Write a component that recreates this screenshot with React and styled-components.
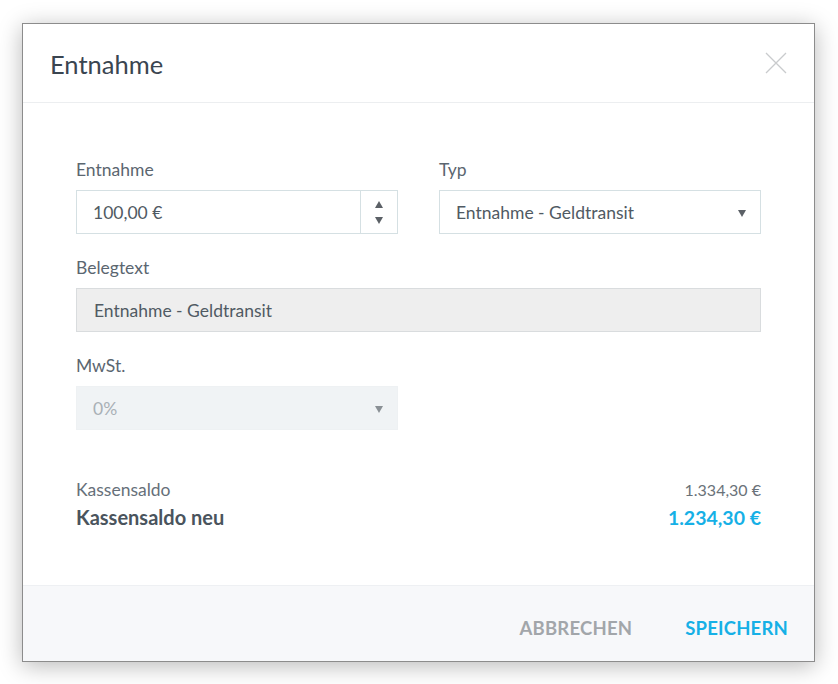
import React from "react";
import styled, { createGlobalStyle } from "styled-components";

const GlobalStyle = createGlobalStyle`
    html, body {
        margin: 0;
        padding: 0;
        background: #ffffff;
        font-family: Lato, "Open Sans", sans-serif;
    }
    * {
        box-sizing: border-box;
    }
`;

const Page = styled.div`
    padding: 23px 23px 23px 22px;
    width: 838px;
    height: 684px;
`;

const Dialog = styled.div`
    width: 793px;
    height: 639px;
    background: #ffffff;
    border: 1px solid #8c8c8c;
    box-shadow: 0 4px 22px rgba(0, 0, 0, 0.28);
    display: flex;
    flex-direction: column;
`;

const Header = styled.div`
    height: 79px;
    display: flex;
    align-items: center;
    justify-content: space-between;
    padding: 0 26px 0 27px;
    border-bottom: 1px solid #eceef0;
    h1 {
        margin: 0;
        font-size: 25.5px;
        font-weight: 400;
        color: #3a4550;
        padding-top: 1px;
    }
`;

const Close = styled.button`
    border: none;
    background: none;
    padding: 0;
    width: 24px;
    height: 24px;
    cursor: pointer;
`;

const Body = styled.div`
    flex: 1;
    padding: 57px 53px 0;
`;

const Row = styled.div`
    display: grid;
    grid-template-columns: ${(p) => p.$cols || "1fr"};
    column-gap: 41px;
    margin-bottom: 24px;
`;

const Field = styled.div`
    display: flex;
    flex-direction: column;
`;

const Label = styled.label`
    font-size: 17.5px;
    line-height: 20px;
    color: #5b6670;
    margin-bottom: 10px;
`;

const Box = styled.div`
    height: 44px;
    display: flex;
    align-items: center;
    border: 1px solid ${(p) => (p.$muted ? "#eef1f3" : p.$grey ? "#d9dcde" : "#d5e0e3")};
    background: ${(p) => (p.$muted ? "#f0f3f5" : p.$grey ? "#eeeeee" : "#ffffff")};
    color: ${(p) => (p.$muted ? "#a9b0b5" : "#505a63")};
    font-size: 17.5px;
    padding-left: ${(p) => (p.$grey ? "17px" : "16px")};
`;

const Value = styled.span`
    flex: 1;
`;

const Spinner = styled.div`
    width: 37px;
    height: 100%;
    border-left: 1px solid #d5e0e3;
    display: flex;
    flex-direction: column;
    align-items: center;
    justify-content: center;
    gap: 9px;
`;

const Caret = styled.span`
    width: 0;
    height: 0;
    border-left: 4.5px solid transparent;
    border-right: 4.5px solid transparent;
    ${(p) =>
        p.$up
            ? `border-bottom: 7px solid ${p.$color || "#5b6066"};`
            : `border-top: 7px solid ${p.$color || "#5b6066"};`}
`;

const SelectCaret = styled.div`
    width: 36px;
    display: flex;
    justify-content: center;
    padding-top: 3px;
`;

const Summary = styled.div`
    margin-top: 49px;
    display: flex;
    flex-direction: column;
    gap: 5px;
`;

const SumRow = styled.div`
    display: flex;
    justify-content: space-between;
    align-items: baseline;
    font-size: ${(p) => (p.$strong ? "20px" : "17.5px")};
    font-weight: ${(p) => (p.$strong ? 700 : 400)};
    color: ${(p) => (p.$strong ? "#4a545d" : "#66707a")};
    span:last-child {
        color: ${(p) => (p.$strong ? "#16b0e6" : "#6a7279")};
        font-size: ${(p) => (p.$strong ? "19.5px" : "16px")};
    }
`;

const Footer = styled.div`
    height: 76px;
    background: #f7f8fa;
    border-top: 1px solid #eef0f3;
    display: flex;
    justify-content: flex-end;
    align-items: center;
    gap: 53px;
    padding: 9px 26px 0 0;
`;

const Button = styled.button`
    border: none;
    background: none;
    padding: 0;
    font-family: inherit;
    font-size: 18.5px;
    font-weight: 700;
    letter-spacing: 0.2px;
    color: ${(p) => (p.$primary ? "#16b0e6" : "#a2a6aa")};
    cursor: pointer;
`;

const CloseIcon = () => (
    <svg width="24" height="24" viewBox="0 0 24 24">
        <path d="M2 2 L22 22 M22 2 L2 22" stroke="#c9cbcd" strokeWidth="1.3" fill="none" />
    </svg>
);

const App = () => (
    <>
        <GlobalStyle />
        <Page>
            <Dialog>
                <Header>
                    <h1>Entnahme</h1>
                    <Close aria-label="Schließen">
                        <CloseIcon />
                    </Close>
                </Header>
                <Body>
                    <Row $cols="1fr 1fr">
                        <Field>
                            <Label>Entnahme</Label>
                            <Box>
                                <Value>100,00 €</Value>
                                <Spinner>
                                    <Caret $up />
                                    <Caret />
                                </Spinner>
                            </Box>
                        </Field>
                        <Field>
                            <Label>Typ</Label>
                            <Box>
                                <Value>Entnahme - Geldtransit</Value>
                                <SelectCaret>
                                    <Caret />
                                </SelectCaret>
                            </Box>
                        </Field>
                    </Row>
                    <Row>
                        <Field>
                            <Label>Belegtext</Label>
                            <Box $grey>
                                <Value>Entnahme - Geldtransit</Value>
                            </Box>
                        </Field>
                    </Row>
                    <Row $cols="1fr 1fr">
                        <Field>
                            <Label>MwSt.</Label>
                            <Box $muted>
                                <Value>0%</Value>
                                <SelectCaret>
                                    <Caret $color="#8a9095" />
                                </SelectCaret>
                            </Box>
                        </Field>
                    </Row>
                    <Summary>
                        <SumRow>
                            <span>Kassensaldo</span>
                            <span>1.334,30 €</span>
                        </SumRow>
                        <SumRow $strong>
                            <span>Kassensaldo neu</span>
                            <span>1.234,30 €</span>
                        </SumRow>
                    </Summary>
                </Body>
                <Footer>
                    <Button>ABBRECHEN</Button>
                    <Button $primary>SPEICHERN</Button>
                </Footer>
            </Dialog>
        </Page>
    </>
);

export default App;
